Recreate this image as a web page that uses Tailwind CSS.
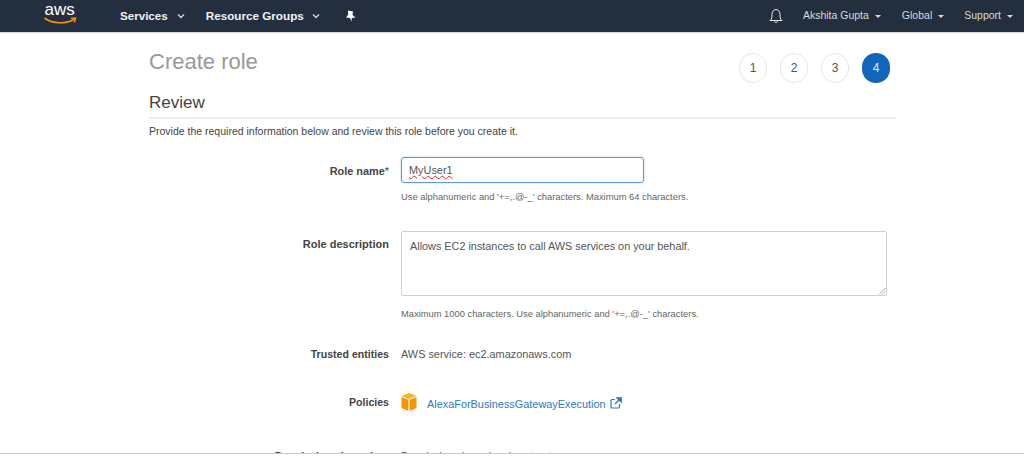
<!DOCTYPE html>
<html>
<head>
<meta charset="utf-8">
<script src="https://cdn.jsdelivr.net/npm/@tailwindcss/browser@4"></script>
</head>
<body class="bg-white font-['Liberation_Sans',Arial,sans-serif] overflow-hidden">
<div class="w-[1024px] h-[461px] flex flex-col overflow-hidden">
  <div class="h-[454px] border-b border-[#c8c8c8] overflow-hidden">
    <header class="h-[33px] bg-[#232f3e] border-b border-[#d5d5d5] flex items-center text-white">
      <svg class="ml-[44px] w-[33px] h-[26px] -mt-[6px]" viewBox="0 0 33 26">
        <text x="0.5" y="15" font-family="Liberation Sans" font-size="17" fill="#fff">aws</text>
        <path d="M1 18.5 C9 24 22 24 30 19.5" stroke="#f79400" stroke-width="1.7" fill="none" stroke-linecap="round"/>
        <path d="M27 18.5 L31.5 18 L30.5 22.5" stroke="#f79400" stroke-width="1.4" fill="none"/>
      </svg>
      <span class="ml-[43px] text-[11.6px] font-bold text-[#f0f2f4]">Services</span>
      <svg class="ml-[9px] w-[8px] h-[6px]" viewBox="0 0 8 6"><path d="M1 1.5 L4 4.5 L7 1.5" stroke="#d5dbdb" stroke-width="1.3" fill="none"/></svg>
      <span class="ml-[21px] text-[11.7px] font-bold text-[#f0f2f4]">Resource Groups</span>
      <svg class="ml-[8px] w-[8px] h-[6px]" viewBox="0 0 8 6"><path d="M1 1.5 L4 4.5 L7 1.5" stroke="#d5dbdb" stroke-width="1.3" fill="none"/></svg>
      <svg class="ml-[25px] w-[11px] h-[12px]" viewBox="0 0 11 12"><path d="M3 0.5 L8 1.5 L7.5 5 L10.5 7.5 L6.8 8 L6.5 11.5 L5 8 L1 7.5 L3.2 4.8 Z" fill="#fff"/></svg>
      <svg class="ml-auto w-[14px] h-[16px]" viewBox="0 0 14 16"><path d="M1 12.5 C3 11 3 9 3 6.5 C3 3.5 5 1.5 7 1.5 C9 1.5 11 3.5 11 6.5 C11 9 11 11 13 12.5 Z M5.5 13 C5.5 15 8.5 15 8.5 13" stroke="#e8eaec" stroke-width="1" fill="none"/></svg>
      <span class="ml-[20px] text-[10.5px] text-[#d5dbdb]">Akshita Gupta</span>
      <span class="ml-[6px] w-0 h-0 border-x-[3px] border-x-transparent border-t-[3px] border-t-[#d5dbdb]"></span>
      <span class="ml-[21px] text-[10.5px] text-[#d5dbdb]">Global</span>
      <span class="ml-[6px] w-0 h-0 border-x-[3px] border-x-transparent border-t-[3px] border-t-[#d5dbdb]"></span>
      <span class="ml-[20px] text-[10.5px] text-[#d5dbdb]">Support</span>
      <span class="ml-[6px] mr-[11px] w-0 h-0 border-x-[3px] border-x-transparent border-t-[3px] border-t-[#d5dbdb]"></span>
    </header>
    <main class="ml-[149px] w-[747px]">
      <div class="flex justify-between items-start pt-[14px] h-[59px]">
        <h1 class="text-[22px] leading-[30px] text-[#999]">Create role</h1>
        <div class="flex gap-[13px] mr-[6px] pt-[6px]">
          <span class="w-[28px] h-[30px] rounded-full border border-[#e6e6e6] flex items-center justify-center text-[12px] text-[#555]">1</span>
          <span class="w-[28px] h-[30px] rounded-full border border-[#e6e6e6] flex items-center justify-center text-[12px] text-[#555]">2</span>
          <span class="w-[28px] h-[30px] rounded-full border border-[#e6e6e6] flex items-center justify-center text-[12px] text-[#555]">3</span>
          <span class="w-[28px] h-[30px] rounded-full bg-[#1166bb] flex items-center justify-center text-[12px] text-[#e4eef8]">4</span>
        </div>
      </div>
      <h2 class="text-[17px] leading-[22px] text-[#444] border-b-2 border-[#eaeded] h-[27px]">Review</h2>
      <p class="mt-[5px] text-[10.5px] leading-[14px] text-[#444]">Provide the required information below and review this role before you create it.</p>

      <div class="mt-[19px] flex">
        <div class="w-[240px] pt-[7px] text-right text-[10.9px] leading-[14px] font-bold text-[#444]">Role name<span class="font-normal">*</span></div>
        <div class="ml-[12px]">
          <div class="w-[243px] h-[26px] border border-[#5b9bd8] rounded-[3px] shadow-[0_0_2px_#9cc4ea] flex items-center pl-[7px] text-[10.9px] text-[#555]"><span class="underline decoration-wavy decoration-[#e02020] decoration-1">MyUser1</span></div>
          <p class="mt-[8px] text-[9.35px] leading-[13px] text-[#666]">Use alphanumeric and '+=,.@-_' characters. Maximum 64 characters.</p>
        </div>
      </div>

      <div class="mt-[27px] flex">
        <div class="w-[240px] pt-[6px] text-right text-[11px] leading-[14px] font-bold text-[#444]">Role description</div>
        <div class="ml-[12px]">
          <div class="relative w-[486px] h-[65px] border border-[#d0d0d0] rounded-[2px] pl-[8px] pt-[7px] text-[10.85px] leading-[14px] text-[#555]">Allows EC2 instances to call AWS services on your behalf.
            <svg class="absolute right-0 bottom-0 w-[8px] h-[8px]" viewBox="0 0 8 8"><path d="M1 7.5 L7.5 1 M4 7.5 L7.5 4" stroke="#999" stroke-width="0.8"/></svg>
          </div>
          <p class="mt-[12px] text-[9.35px] leading-[13px] text-[#666]">Maximum 1000 characters. Use alphanumeric and '+=,.@-_' characters.</p>
        </div>
      </div>

      <div class="mt-[26px] flex text-[10.6px] leading-[14px]">
        <div class="w-[240px] text-right font-bold text-[#444]">Trusted entities</div>
        <div class="ml-[12px] text-[#555] text-[10.9px]">AWS service: ec2.amazonaws.com</div>
      </div>

      <div class="mt-[34px] flex items-start">
        <div class="w-[240px] text-right text-[10.6px] leading-[14px] font-bold text-[#444]">Policies</div>
        <svg class="ml-[12px] -mt-[2px] w-[16px] h-[18px]" viewBox="0 0 16 18"><path d="M8 0 L15.5 3 L8 6 L0.5 3 Z" fill="#fdb022"/><path d="M0.5 4 L7.4 6.8 L7.4 18 L0.5 15 Z" fill="#f79400"/><path d="M15.5 4 L8.6 6.8 L8.6 18 L15.5 15 Z" fill="#f79400"/></svg>
        <a class="ml-[10px] mt-[2px] text-[10.9px] leading-[14px] text-[#2f78c4]">AlexaForBusinessGatewayExecution</a>
        <svg class="ml-[4px] mt-[2px] w-[12px] h-[12px]" viewBox="0 0 12 12"><path d="M9.5 7 V10 C9.5 10.6 9 11 8.5 11 H2 C1.4 11 1 10.6 1 10 V3.5 C1 3 1.4 2.5 2 2.5 H5" stroke="#2f78c4" stroke-width="1.2" fill="none"/><path d="M7 0.8 H11.2 V5 Z M9.5 2.5 L5 7" stroke="#2f78c4" stroke-width="1.3" fill="#2f78c4"/></svg>
      </div>

      <div class="mt-[38px] flex text-[10.6px] leading-[14px]">
        <div class="w-[240px] text-right font-bold text-[#444]">Permissions boundary</div>
        <div class="ml-[12px] text-[#555]">Permissions boundary is not set</div>
      </div>
    </main>
  </div>
</div>
</body>
</html>
